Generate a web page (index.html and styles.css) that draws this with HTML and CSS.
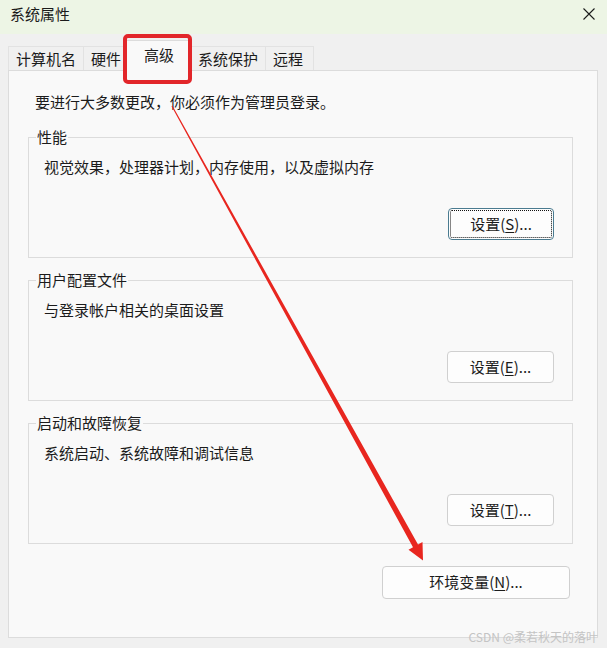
FILE: index.html
```html
<!DOCTYPE html>
<html lang="zh-CN">
<head>
    <meta charset="UTF-8">
    <meta name="viewport" content="width=device-width, initial-scale=1.0">
    <title>系统属性</title>
    <link rel="stylesheet" href="styles.css">
</head>
<body>

<div class="window">
    <!-- 标题栏 -->
    <div class="titlebar">
        <span class="title">系统属性</span>
        <svg class="close" width="12" height="12" viewBox="0 0 12 12">
            <path d="M0.5 0.5 L11.5 11.5 M11.5 0.5 L0.5 11.5" stroke="#1b1b1b" stroke-width="1.1" fill="none"/>
        </svg>
    </div>

    <div class="content">
        <!-- 选项卡 -->
        <div class="tabs">
            <div class="tab">计算机名</div>
            <div class="tab">硬件</div>
            <div class="tab active">高级</div>
            <div class="tab">系统保护</div>
            <div class="tab tab-last">远程</div>
        </div>

        <div class="pane">
            <p class="intro">要进行大多数更改，你必须作为管理员登录。</p>

            <div class="group">
                <div class="group-title">性能</div>
                <p class="desc">视觉效果，处理器计划，内存使用，以及虚拟内存</p>
                <div class="actions">
                    <button class="btn focused">设置(<u>S</u>)...</button>
                </div>
            </div>

            <div class="group">
                <div class="group-title">用户配置文件</div>
                <p class="desc">与登录帐户相关的桌面设置</p>
                <div class="actions">
                    <button class="btn">设置(<u>E</u>)...</button>
                </div>
            </div>

            <div class="group">
                <div class="group-title">启动和故障恢复</div>
                <p class="desc">系统启动、系统故障和调试信息</p>
                <div class="actions">
                    <button class="btn">设置(<u>T</u>)...</button>
                </div>
            </div>

            <div class="actions">
                <button class="btn btn-env">环境变量(<u>N</u>)...</button>
            </div>
        </div>
    </div>

    <!-- 标注 -->
    <div class="highlight"></div>
    <svg class="arrow" width="607" height="648" viewBox="0 0 607 648">
        <polygon fill="#e8261f" points="172.5,105.8 418,544.5 422.5,542 423,560.5 408.5,549.8 413,547.3 171.5,106.2"/>
    </svg>
    <div class="watermark">CSDN @柔若秋天的落叶</div>
</div>

</body>
</html>
```

FILE: styles.css
```css
body {
    margin: 0;
    font-family: "Noto Sans CJK SC", "Microsoft YaHei", sans-serif;
    font-size: 15px;
    color: #1b1b1b;
    background-color: #f0f0f0;
}
.window {
    position: relative;
    width: 607px;
    height: 648px;
    overflow: hidden;
    background-color: #f0f0f0;
}
.titlebar {
    display: flex;
    justify-content: space-between;
    align-items: flex-start;
    height: 34px;
    padding: 4px 12px 0 10px;
    box-sizing: border-box;
    background-color: #edf5e5;
    line-height: 20px;
}
.close {
    margin-top: 4px;
}
.content {
    padding: 0 9px 0 8px;
}
.tabs {
    display: flex;
    align-items: flex-end;
    height: 36px;
}
.tab {
    height: 24px;
    line-height: 23px;
    padding: 0 7px;
    border: 1px solid #e2e2e2;
    border-bottom: none;
    margin-right: -1px;
    background-color: #f0f0f0;
    box-sizing: border-box;
}
.tab.active {
    position: relative;
    z-index: 1;
    height: 31px;
    line-height: 28px;
    padding: 0 17px;
    margin: 0 -2px -1px;
    background-color: #f9f9f9;
    border-color: #dcdcdc;
}
.tab-last {
    min-width: 49px;
}
.pane {
    height: 568px;
    padding: 21px 24px 0 19px;
    border: 1px solid #dcdcdc;
    background-color: #f9f9f9;
    box-sizing: border-box;
}
.intro {
    margin: 0 0 25px;
    padding-left: 7px;
    line-height: 20px;
}
.group {
    border: 1px solid #dcdcdc;
    padding: 0 18px 17px 15px;
    margin-bottom: 22px;
}
.group:last-of-type {
    margin-bottom: 19px;
}
.group-title {
    display: table;
    margin: -11px 0 0 -8px;
    padding: 0 1px;
    line-height: 20px;
    background-color: #f9f9f9;
}
.desc {
    margin: 10px 0 0;
    line-height: 20px;
}
.actions {
    display: flex;
    justify-content: flex-end;
    margin-top: 31px;
}
.pane > .actions {
    margin: 0 3px 0 0;
}
.btn {
    width: 107px;
    height: 32px;
    padding: 0 0 2px;
    font-family: inherit;
    font-size: 15px;
    color: #1b1b1b;
    background-color: #fdfdfd;
    border: 1px solid #d0d0d0;
    border-radius: 4px;
}
.btn u {
    text-underline-offset: 2px;
}
.btn.focused {
    width: 106px;
    border-color: #4a7b90;
    outline: 1px dotted #111;
    outline-offset: -3px;
}
.btn-env {
    width: 188px;
    height: 33px;
}
.highlight {
    position: absolute;
    left: 123px;
    top: 34px;
    width: 69px;
    height: 50px;
    box-sizing: border-box;
    border: 4px solid #e2262a;
    border-radius: 5px;
    z-index: 2;
}
.arrow {
    position: absolute;
    left: 0;
    top: 0;
    z-index: 3;
    pointer-events: none;
}
.watermark {
    position: absolute;
    right: 9px;
    bottom: 4px;
    font-size: 12px;
    line-height: 14px;
    color: #c4c4c4;
    z-index: 3;
}
```
